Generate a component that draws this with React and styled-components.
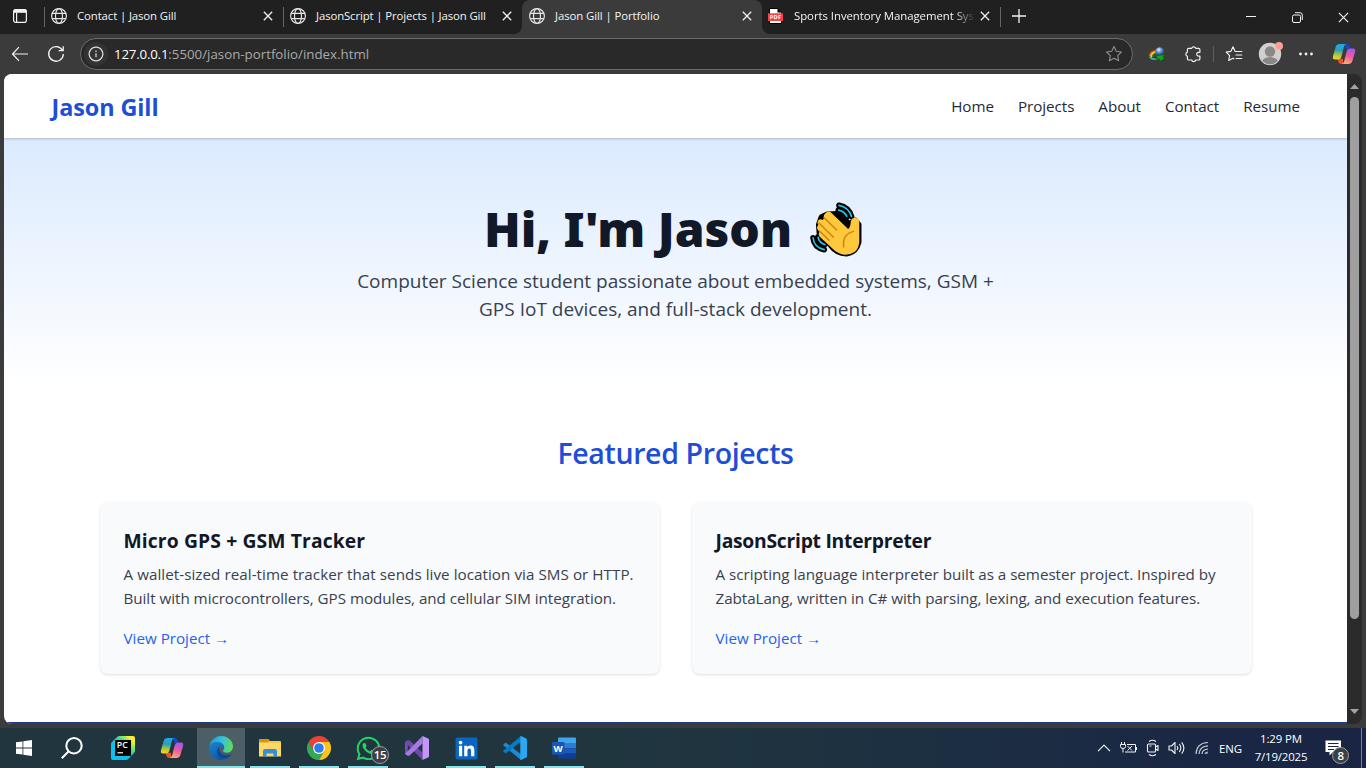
import React from 'react';
import styled, { createGlobalStyle, css } from 'styled-components';
import { FaWhatsapp, FaLinkedin } from 'react-icons/fa';

const GlobalStyle = createGlobalStyle`
  *, *::before, *::after { box-sizing: border-box; }
  html, body { margin: 0; height: 100%; overflow: hidden; }
  body {
    font-family: "Open Sans", "Noto Sans", sans-serif;
    -webkit-font-smoothing: antialiased;
  }
  h1, h2, h3, p { margin: 0; }
  a { color: inherit; text-decoration: none; }
  svg { display: block; flex: none; }
`;

const Desktop = styled.div`
  width: 1366px;
  height: 768px;
  display: flex;
  flex-direction: column;
  overflow: hidden;
  background: #3b3b3b;
`;

const Track = styled.span`
  letter-spacing: ${(p) => p.$by || 0}px;
  white-space: nowrap;
`;

/* ---------- Tab strip ---------- */

const TabStrip = styled.div`
  height: 34px;
  flex: none;
  display: flex;
  background: linear-gradient(#202020 50%, #3b3b3b 50%);
`;

const TabGroup = styled.div`
  display: flex;
  background: #202020;
  ${(p) => (p.$side === 'left'
    ? css`border-bottom-right-radius: 8px;`
    : css`flex: 1; border-bottom-left-radius: 8px;`)}
`;

const WorkspaceButton = styled.div`
  width: 44px;
  padding: 8px 0 0 12px;
`;

const Tab = styled.div`
  width: ${(p) => p.$width || 239}px;
  height: 34px;
  display: flex;
  align-items: center;
  padding: 0 10px 2px ${(p) => p.$inset || 6}px;
  color: #f3f3f3;
  font-size: 11.4px;
  ${(p) => p.$active && css`
    background: #3b3b3b;
    border-radius: 8px 8px 0 0;
  `}
`;

const TabTitle = styled.div`
  flex: 1;
  margin-left: ${(p) => (p.$fade ? 10 : 9)}px;
  white-space: nowrap;
  line-height: 18px;
  ${(p) => p.$fade && css`
    mask-image: linear-gradient(90deg, #000 160px, rgba(0, 0, 0, 0.1) 179px);
  `}
`;

const StripDivider = styled.div`
  width: 1px;
  height: 20px;
  margin-top: 7px;
  background: #666;
`;

const NewTab = styled.div`
  padding: 8px 0 0 10px;
`;

const WindowControls = styled.div`
  display: flex;
  margin-left: auto;
`;

const WindowButton = styled.div`
  width: 46px;
  height: 34px;
  display: grid;
  place-items: center;
`;

/* ---------- Toolbar ---------- */

const Toolbar = styled.div`
  height: 40px;
  flex: none;
  display: flex;
  align-items: center;
  padding-left: 2px;
  background: #3b3b3b;
`;

const ToolButton = styled.div`
  width: ${(p) => p.$width || 36}px;
  height: 36px;
  display: grid;
  place-items: center;
`;

const AddressBar = styled.div`
  width: 1053px;
  height: 32px;
  margin-left: 6px;
  margin-right: 6px;
  display: flex;
  align-items: center;
  padding: 0 9px 0 3px;
  border: 1px solid #6c6c6c;
  border-radius: 16px;
  background: #292929;
`;

const SiteInfo = styled.div`
  width: 24px;
  height: 24px;
  display: grid;
  place-items: center;
  border-radius: 50%;
  background: #333;
`;

const Url = styled.div`
  flex: 1;
  margin-left: 6px;
  font-size: 13.3px;
  line-height: 20px;
  color: #a9a9a9;
`;

const Host = styled(Track)`
  color: #fff;
`;

const ToolDivider = styled.div`
  width: 1px;
  height: 16px;
  margin: 0 2px 0 2px;
  background: #5e5e5e;
`;

/* ---------- Page ---------- */

const Viewport = styled.div`
  height: 654px;
  flex: none;
  display: flex;
  padding: 0 4px 6px;
`;

const Page = styled.div`
  width: 1343px;
  height: 650px;
  overflow: hidden;
  background: #fff;
  border-radius: 8px 0 0 8px;
  color: #111827;
`;

const SiteHeader = styled.header`
  position: relative;
  height: 64px;
  display: flex;
  align-items: center;
  justify-content: space-between;
  padding: 0 47px 0 47.5px;
  background: #fff;
  box-shadow: 0 1px 3px rgba(0, 0, 0, 0.1), 0 1px 2px rgba(0, 0, 0, 0.12);
`;

const Brand = styled.div`
  font-size: 23.4px;
  line-height: 32px;
  font-weight: 700;
  color: #1d4ed8;
  letter-spacing: -0.08px;
  padding-top: 1px;
`;

const SiteNav = styled.nav`
  display: flex;
  gap: 24px;
  font-size: 15.2px;
  line-height: 24px;
  letter-spacing: -0.04px;
  color: #1f2937;
`;

const Hero = styled.section`
  height: 248px;
  padding-top: 64px;
  display: flex;
  flex-direction: column;
  align-items: center;
  gap: 17px;
  background: linear-gradient(#dbeafe, #fff);
`;

const Greeting = styled.h1`
  display: flex;
  align-items: center;
  gap: 18px;
  height: 48px;
  font-family: "Noto Sans", sans-serif;
  font-size: 48px;
  line-height: 48px;
  font-weight: 900;
  padding: 6px 5px 0 0;
`;

const Intro = styled.p`
  width: 672px;
  text-align: center;
  font-size: 19px;
  line-height: 28px;
  color: #374151;
`;

const Featured = styled.section`
  padding: 49px 95.5px 48px;
`;

const SectionTitle = styled.h2`
  margin-bottom: 31px;
  text-align: center;
  font-size: 28.5px;
  line-height: 36px;
  font-weight: 600;
  letter-spacing: -0.36px;
  color: #1d4ed8;
`;

const ProjectGrid = styled.div`
  display: grid;
  grid-template-columns: 1fr 1fr;
  gap: 32px;
`;

const ProjectCard = styled.article`
  padding: 25px 24px 24px;
  border-radius: 8px;
  background: #f9fafb;
  box-shadow: 0 1px 3px rgba(0, 0, 0, 0.1), 0 1px 2px -1px rgba(0, 0, 0, 0.1);
  font-size: 15.2px;
  line-height: 24px;
  color: #374151;
`;

const ProjectTitle = styled.h3`
  margin-bottom: 7px;
  font-size: 19.3px;
  line-height: 28px;
  font-weight: 700;
  color: #111827;
`;

const ProjectLink = styled.a`
  display: block;
  height: 24px;
  margin-top: 16px;
  color: #2563eb;
`;

const SiteFooter = styled.footer`
  height: 40px;
  background: #1e3a8a;
`;

const Scrollbar = styled.div`
  width: 15px;
  height: 650px;
  display: flex;
  flex-direction: column;
  align-items: center;
  padding: 10px 0 10px;
  border-radius: 0 8px 8px 0;
  background: #2b2b2b;
`;

const ScrollThumb = styled.div`
  width: 9px;
  height: 522px;
  margin: 8px 0 auto;
  border-radius: 5px;
  background: #9f9f9f;
`;

/* ---------- Taskbar ---------- */

const Taskbar = styled.div`
  height: 40px;
  flex: none;
  display: flex;
  background: linear-gradient(90deg, #20353e 0%, #20363f 45%, #1c2e42 72%, #1a2744 88%, #192543 100%);
`;

const SystemButton = styled.div`
  width: 48px;
  height: 40px;
  display: grid;
  place-items: center;
`;

const AppList = styled.div`
  display: flex;
  gap: 1px;
  margin-left: 3px;
`;

const AppButton = styled.div`
  position: relative;
  width: 48px;
  height: 40px;
  display: grid;
  place-items: center;
  background: ${(p) => (p.$active ? '#4c5f66' : 'transparent')};
  ${(p) => p.$open && css`
    &::after {
      content: '';
      position: absolute;
      left: ${p.$active ? 0 : 4}px;
      right: ${p.$active ? 0 : 4}px;
      bottom: 0;
      height: 2px;
      background: #84e2e8;
    }
  `}
`;

const Badge = styled.span`
  position: absolute;
  left: ${(p) => p.$left}px;
  top: ${(p) => p.$top}px;
  width: ${(p) => p.$size}px;
  height: ${(p) => p.$size}px;
  display: grid;
  place-items: center;
  border: 1px solid #9a9fa3;
  border-radius: 50%;
  background: #3a4043;
  color: #fff;
  font-size: 11.5px;
  line-height: 12px;
  font-weight: 600;
  letter-spacing: -0.4px;
`;

const LinkedInTile = styled.div`
  width: 22px;
  height: 22px;
  display: flex;
  align-items: center;
  justify-content: center;
  background: linear-gradient(#fff, #fff) center / 18px 18px no-repeat;
`;

const Tray = styled.div`
  display: flex;
  align-items: center;
  margin-left: auto;
  color: #fff;
  font-size: 11.4px;
`;

const TrayIcon = styled.div`
  width: 24.4px;
  height: 40px;
  display: grid;
  place-items: center;
`;

const Language = styled.div`
  width: 33px;
  text-align: center;
`;

const Clock = styled.div`
  width: 68px;
  display: flex;
  flex-direction: column;
  align-items: center;
  line-height: 18px;
`;

const Notifications = styled.div`
  position: relative;
  width: 46px;
  height: 40px;
  padding: 12px 0 0 10px;
`;

const ShowDesktop = styled.div`
  width: 5px;
  height: 40px;
  border-left: 1px solid #77808f;
`;

/* ---------- Icons ---------- */

const GlobeIcon = () => (
  <svg width="18" height="18" viewBox="0 0 18 18" fill="none" stroke="#e6e6e6" strokeWidth="1.15">
    <circle cx="9" cy="9" r="7.4" />
    <ellipse cx="9" cy="9" rx="3.5" ry="7.4" />
    <path d="M2.2 6.4h13.6M2.2 11.6h13.6" />
  </svg>
);

const CloseIcon = ({ size = 10, width = 1.3 }) => (
  <svg width={size} height={size} viewBox="0 0 10 10" fill="none" stroke="#f0f0f0" strokeWidth={width}>
    <path d="M.8 .8l8.4 8.4M9.2 .8L.8 9.2" />
  </svg>
);

const PdfIcon = () => (
  <svg width="17" height="18" viewBox="0 0 17 18">
    <path d="M2.5 1.5h8.2l3.8 3.8v11.2h-12z" fill="#fff" stroke="#000" />
    <path d="M10.5 1.5v4h4z" fill="#000" />
    <rect x="1" y="6.3" width="15" height="7.7" fill="#f44343" />
    <text x="8.5" y="12.3" fontSize="5.6" fontWeight="700" fill="#fff" textAnchor="middle" letterSpacing=".3">PDF</text>
  </svg>
);

const WorkspaceIcon = () => (
  <svg width="16" height="16" viewBox="0 0 16 16" fill="none" stroke="#f2f2f2" strokeWidth="1.2">
    <rect x="1.6" y="1.6" width="12.8" height="12.8" rx="2.2" />
    <path d="M1.8 4.2V3.4q0-1.6 1.6-1.6h9.2q1.6 0 1.6 1.6v.8z" fill="#f2f2f2" />
    <path d="M4.6 4.5v9.8" />
  </svg>
);

const StarIcon = () => (
  <svg width="18" height="18" viewBox="0 0 18 18" fill="none" stroke="#8f8f8f" strokeWidth="1.1" strokeLinejoin="round">
    <path d="M9 1.6l2.3 4.7 5.1.7-3.7 3.6.9 5.1L9 13.3l-4.6 2.4.9-5.1L1.6 7l5.1-.7z" />
  </svg>
);

const FavoritesIcon = () => (
  <svg width="18" height="18" viewBox="0 0 18 18" fill="none" stroke="#f0f0f0" strokeWidth="1.15" strokeLinejoin="round" strokeLinecap="round">
    <path d="M10.2 6.4L8 1.8 5.8 6.4l-4.6.7 3.4 3.4-.9 5 4.2-2.2.9.5M11 6.5h5.8M11 10h5.8M11 13.5h5.8" />
  </svg>
);

const PuzzleIcon = () => (
  <svg width="18" height="18" viewBox="0 0 18 18" fill="none" stroke="#f0f0f0" strokeWidth="1.2" strokeLinejoin="round">
    <path d="M4.7 3.4h2.9a2.2 2.2 0 0 1 4.2 0h2.8q1.3 0 1.3 1.3v2.6h-1.3a1.9 1.9 0 0 0 0 3.8h1.3v2.6q0 1.3-1.3 1.3h-2.8a2.2 2.2 0 0 1-4.2 0H4.7q-1.3 0-1.3-1.3v-2.4a2.2 2.2 0 0 1 0-4.2V4.7q0-1.3 1.3-1.3z" />
  </svg>
);

const DownloaderIcon = () => (
  <svg width="18" height="18" viewBox="0 0 18 18">
    <defs>
      <radialGradient id="orb" cx=".42" cy=".3" r=".75">
        <stop offset="0" stopColor="#e8f4ff" />
        <stop offset=".3" stopColor="#7fa9dc" />
        <stop offset=".65" stopColor="#3565a8" />
        <stop offset="1" stopColor="#1d3c50" />
      </radialGradient>
    </defs>
    <path d="M9 5.2Q.8 6.2 1.6 11.5" fill="none" stroke="#d9401c" strokeWidth="1.6" />
    <path d="M9 6.8Q2.4 7.5 3.4 12.3" fill="none" stroke="#f8d21c" strokeWidth="2.2" />
    <path d="M8 8.8Q4.6 9.5 5.5 12.5" fill="none" stroke="#27702c" strokeWidth="2.2" />
    <path d="M1.8 12Q4.5 15.4 9.5 13.8" fill="none" stroke="#4db9a5" strokeWidth="1.5" />
    <circle cx="11.6" cy="6.6" r="4.4" fill="url(#orb)" />
    <path d="M6 10.200Q12 10.800 17.300 9.200L15 12l1.600 1.800-4.400 2.400-1.500-2.400-3 .5 1.200-2.300z" fill="#0da51d" stroke="#0a4a12" strokeWidth=".6" />
  </svg>
);

const AvatarIcon = () => (
  <svg width="26" height="26" viewBox="0 0 26 26">
    <defs><clipPath id="face"><circle cx="13" cy="13" r="10.3" /></clipPath></defs>
    <circle cx="13" cy="13" r="11.2" fill="#d2d0ce" />
    <circle cx="13" cy="10.5" r="5.2" fill="#8a8886" />
    <ellipse cx="13" cy="22.5" rx="8.6" ry="6.6" fill="#8a8886" clipPath="url(#face)" />
    <circle cx="22" cy="5" r="3.8" fill="#ff9d94" stroke="#fbb5ae" strokeWidth=".6" />
  </svg>
);

const CopilotIcon = ({ id }) => (
  <svg width="24" height="24" viewBox="0 0 24 24">
    <defs>
      <linearGradient id={`${id}a`} x1=".4" y1="0" x2=".3" y2="1">
        <stop offset="0" stopColor="#20a7f5" />
        <stop offset=".4" stopColor="#2f9fb0" />
        <stop offset=".7" stopColor="#a8c73d" />
        <stop offset="1" stopColor="#fbd51c" />
      </linearGradient>
      <linearGradient id={`${id}b`} x1=".6" y1="0" x2=".3" y2="1">
        <stop offset="0" stopColor="#a556e9" />
        <stop offset=".5" stopColor="#ee5c9c" />
        <stop offset="1" stopColor="#ffae6b" />
      </linearGradient>
    </defs>
    <path d="M12.6 2h2.2q2.2 0 2.8 2.2l.8 3h-4z" fill="#1649c4" />
    <path d="M11.4 22H9.2q-2.2 0-2.8-2.2l-.6-2.4 5-1z" fill="#f1502f" />
    <path d="M7.8 2h6.6q-1.8.3-2.4 2.6L9.3 14.9q-.7 2.5-3.2 2.5H3.2q-3 0-2.2-3.2L3.6 5Q4.5 2 7.8 2z" fill={`url(#${id}a)`} />
    <path d="M16.2 22H9.7q1.8-.3 2.4-2.6l2.7-10.3q.7-2.5 3.2-2.5h2.9q3 0 2.2 3.2L20.4 19q-.9 3-4.2 3z" fill={`url(#${id}b)`} />
  </svg>
);

const WavingHand = () => (
  <svg width="52" height="55" viewBox="34 21 154 163" fill="none" strokeLinecap="round" strokeLinejoin="round">
    <g stroke="#000" strokeWidth="17">
      <path d="M120 31Q148 36 157 64M118 45Q136 49 142 66M43 127Q46 156 76 162M58 124Q62 142 78 147" />
      <path d="M84 58L118 56L150 86L168 76L178 88V140Q170 170 142 174Q120 174 106 161L62 112L60 88L68 66z" fill="#000" />
    </g>
    <path d="M84 51Q91 47 97 53L147 101Q154 96 155 78Q158 68 168 68Q179 70 180 80V140Q178 160 166 169Q152 178 136 177Q120 176 106 164L62 123Q57 116 62 109L57 103Q52 95 59 89Q54 82 58 76Q64 70 71 74L75 71Q72 59 84 51z" fill="#ffc83d" />
    <path d="M76 68L113 104M61 84L103 125M62 107L90 134M163 108Q128 118 134 154" stroke="#cc8912" strokeWidth="4.5" />
    <path d="M120 31Q148 36 157 64M119 45Q136 49 143 63M43 127Q46 156 76 162M58 126Q62 142 78 147" stroke="#28c4ec" strokeWidth="5" />
  </svg>
);

const ScrollArrow = ({ down }) => (
  <svg width="9" height="5" viewBox="0 0 9 5">
    <path d={down ? 'M0 0h9L4.5 5z' : 'M0 5h9L4.5 0z'} fill="#a3a3a3" />
  </svg>
);

const WindowsIcon = () => (
  <svg width="16" height="16" viewBox="0 0 16 16" fill="#fff">
    <path d="M0 2.3l6.5-.9v6.1H0zM7.3 1.3L16 0v7.5H7.3zM0 8.4h6.5v6.2L0 13.7zM7.3 8.4H16V16l-8.7-1.2z" />
  </svg>
);

const SearchIcon = () => (
  <svg width="22" height="22" viewBox="0 0 22 22" fill="none" stroke="#fff" strokeWidth="2">
    <circle cx="13" cy="8.7" r="7.7" />
    <path d="M7.7 14.3L.8 21.2" />
  </svg>
);

const PyCharmIcon = () => (
  <svg width="24" height="24" viewBox="0 0 24 24">
    <defs>
      <linearGradient id="pyc" x1="0" y1="1" x2="1" y2="0">
        <stop offset=".4" stopColor="#07c3f2" />
        <stop offset=".62" stopColor="#38d9a0" />
        <stop offset=".85" stopColor="#f6ee2f" />
      </linearGradient>
    </defs>
    <path d="M8.5 0H22q2 0 2 2v12.8q0 1.2-.8 2l-6 6.2q-1 1-2.2 1H2q-2 0-2-2V8q0-1.2.9-2L6.4.8Q7.2 0 8.5 0z" fill="url(#pyc)" />
    <rect x="4" y="4" width="16" height="16" fill="#000" />
    <text x="5.8" y="12.2" fontSize="8.8" fontWeight="600" fill="#fff">PC</text>
    <path d="M6.5 16.8h5.5" stroke="#fff" strokeWidth="1.2" />
  </svg>
);

const EdgeIcon = () => (
  <svg width="24" height="24" viewBox="0 0 24 24">
    <defs>
      <linearGradient id="edgeTop" x1="0" y1=".3" x2="1" y2=".5">
        <stop offset="0" stopColor="#2595d4" />
        <stop offset=".5" stopColor="#35c1dc" />
        <stop offset="1" stopColor="#5fdc59" />
      </linearGradient>
      <linearGradient id="edgeBody" x1="0" y1="0" x2=".6" y2="1">
        <stop offset="0" stopColor="#1b86d3" />
        <stop offset="1" stopColor="#0f55a5" />
      </linearGradient>
    </defs>
    <path d="M.3 10.5C1.4 4.2 6.2 0 12 0c7 0 12 5 12 10.6 0 3.8-2.8 6.1-6 6.1-2.8 0-4-1-4-1.9 0-.8 1.2-1.2 1.2-3.3 0-2.8-3-5.5-7-5.5-3.5 0-6.4 1.8-7.9 4.5z" fill="url(#edgeTop)" />
    <path d="M.2 10.7C1.5 7.8 4.5 6 8.2 6c4 0 7 2.6 7 5.4-3-1.6-6.4-.3-6.4 3.5 0 4.5 4.6 8.7 10 6.9l1.3-.6C18.2 23 15.3 24 12 24 5.2 24-.8 18.5.2 10.7z" fill="url(#edgeBody)" />
    <path d="M10.3 10.7c-4 2.6-2.8 9.8 2.2 11.2 2.7.8 5.9.2 8.6-1.7 1-.8 1.8-1.8 1.4-2.1-.4-.3-1.9 1-4.9 1-4.8 0-8.1-4.2-7.3-8.4z" fill="#0d4a93" />
  </svg>
);

const ExplorerIcon = () => (
  <svg width="22" height="20" viewBox="0 0 22 20">
    <path d="M0 1.5Q0 1 .6 1h8.6l1.6 2H21q1 0 1 1v14H0z" fill="#f9c64c" />
    <path d="M0 1.5Q0 1 .6 1h8.6l1 1.5-1 1.8H0z" fill="#dc9400" />
    <path d="M0 5h22v13.5H0z" fill="#ffd867" />
    <path d="M4 18.8v-5.6Q4 11 6.2 11h9.6Q18 11 18 13.2v5.6h-3.5v-3.3h-7v3.3z" fill="#338fd8" />
  </svg>
);

const ChromeIcon = () => (
  <svg width="24" height="24" viewBox="0 0 24 24">
    <path d="M1.6 6A12 12 0 0 1 22.4 6H12L6.8 15z" fill="#ea4335" />
    <path d="M1.6 6A12 12 0 0 0 12 24l5.2-9H6.8z" fill="#34a853" />
    <path d="M22.4 6A12 12 0 0 1 12 24l5.2-9L12 6z" fill="#fcc31e" />
    <circle cx="12" cy="12" r="6" fill="#fff" />
    <circle cx="12" cy="12" r="4.8" fill="#2f7cee" />
  </svg>
);

const VisualStudioIcon = () => (
  <svg width="24" height="24" viewBox="0 0 24 24">
    <path d="M0 6v12l2.8 1.7V4.3z" fill="#7550b8" />
    <path d="M0 6L2.8 4.3Q3.8 4 4.6 4.6L17.5 16.5V24L2.8 9z" fill="#6f48b2" />
    <path d="M0 18L2.8 19.7Q3.8 20 4.6 19.4L17.5 7.5V0L2.8 15z" fill="#a779e2" />
    <path d="M17.5 0L24 3v18l-6.5 3z" fill="#c596fa" />
  </svg>
);

const VsCodeIcon = () => (
  <svg width="24" height="24" viewBox="0 0 24 24">
    <path d="M.4 8.6l1.7-1.5q.6-.5 1.3 0L18 18.2V24L.5 9.6q-.5-.5-.1-1z" fill="#1d8ad2" />
    <path d="M.4 15.4l1.7 1.5q.6.5 1.3 0L18 5.8V0L.5 14.4q-.5.5-.1 1z" fill="#0879c6" />
    <path d="M17.3.3Q18 0 18.6.3l4.6 2.2q.8.4.8 1.3v16.4q0 .9-.8 1.3l-4.6 2.2q-.6.3-1.3 0z" fill="#29a9f2" />
  </svg>
);

const WordIcon = () => (
  <svg width="24" height="22" viewBox="0 0 24 22">
    <path d="M6 1.5Q6 .5 7 .5h16q1 0 1 1V6H6z" fill="#41a5ee" />
    <path d="M6 6h18v5.3H6z" fill="#2b7cd3" />
    <path d="M6 11.3h18v5.2H6z" fill="#185abd" />
    <path d="M6 16.5h18v4.3q0 1-1 1H7q-1 0-1-1z" fill="#103f91" />
    <rect y="5" width="12.5" height="12.5" rx="1" fill="#1a56b5" />
    <text x="6.2" y="14.8" fontSize="9.5" fontWeight="700" fill="#fff" textAnchor="middle">W</text>
  </svg>
);

const LineIcon = ({ w = 16, h = 16, d, sw = 1.2, color = '#f2f2f2' }) => (
  <svg width={w} height={h} viewBox={`0 0 ${w} ${h}`} fill="none" stroke={color} strokeWidth={sw} strokeLinejoin="round">
    <path d={d} />
  </svg>
);

/* ---------- Sections ---------- */

const apps = [
  { name: 'PyCharm', icon: <PyCharmIcon /> },
  { name: 'Copilot', icon: <CopilotIcon id="dock" /> },
  { name: 'Edge', icon: <EdgeIcon />, open: true, active: true },
  { name: 'Explorer', icon: <ExplorerIcon />, open: true },
  { name: 'Chrome', icon: <ChromeIcon />, open: true },
  { name: 'WhatsApp', icon: <FaWhatsapp size={27} color="#25d366" />, open: true, count: 15 },
  { name: 'Visual Studio', icon: <VisualStudioIcon /> },
  { name: 'LinkedIn', icon: <LinkedInTile><FaLinkedin size={25} color="#0a66c2" /></LinkedInTile>, open: true },
  { name: 'VS Code', icon: <VsCodeIcon />, open: true },
  { name: 'Word', icon: <WordIcon />, open: true },
];

const projects = [
  {
    title: 'Micro GPS + GSM Tracker',
    titleTrack: 0.13,
    lines: [
      ['A wallet-sized real-time tracker that sends live location via SMS or HTTP.', 0.05],
      ['Built with microcontrollers, GPS modules, and cellular SIM integration.', -0.03],
    ],
  },
  {
    title: 'JasonScript Interpreter',
    titleTrack: -0.25,
    lines: [
      ['A scripting language interpreter built as a semester project. Inspired by', -0.02],
      ['ZabtaLang, written in C# with parsing, lexing, and execution features.', -0.05],
    ],
  },
];

const BrowserTab = ({ title, track, icon = <GlobeIcon />, fade, ...rest }) => (
  <Tab {...rest}>
    {icon}
    <TabTitle $fade={fade}><Track $by={track}>{title}</Track></TabTitle>
    <CloseIcon />
  </Tab>
);

const BrowserChrome = () => (
  <>
    <TabStrip>
      <TabGroup $side="left">
        <WorkspaceButton><WorkspaceIcon /></WorkspaceButton>
        <StripDivider />
        <BrowserTab title="Contact | Jason Gill" track={-0.12} $width={238} $inset={5} />
        <StripDivider />
        <BrowserTab title="JasonScript | Projects | Jason Gill" track={-0.13} $width={238} $inset={5} />
      </TabGroup>
      <BrowserTab title="Jason Gill | Portfolio" track={-0.09} $width={240} $active />
      <TabGroup $side="right">
        <BrowserTab title="Sports Inventory Management Sys" track={-0.05} icon={<PdfIcon />} fade $width={238} $inset={5} />
        <StripDivider />
        <NewTab><LineIcon d="M8 1v14M1 8h14" sw={1.3} /></NewTab>
        <WindowControls>
          <WindowButton><LineIcon w={10} h={10} d="M0 4.5h10" sw={1} /></WindowButton>
          <WindowButton>
            <LineIcon w={11} h={11} sw={1} d="M2 3h5q1.5 0 1.5 1.5v4.5q0 1.5-1.5 1.5H2Q.5 10.5.5 9V4.5Q.5 3 2 3zM3 .7h5q2.3 0 2.3 2.3v5" />
          </WindowButton>
          <WindowButton><CloseIcon size={11} width={1.1} /></WindowButton>
        </WindowControls>
      </TabGroup>
    </TabStrip>
    <Toolbar>
      <ToolButton><LineIcon w={18} h={16} d="M17 8H1.8M8 1.2L1.5 8 8 14.8" /></ToolButton>
      <ToolButton>
        <LineIcon w={18} h={18} sw={1.3} d="M15.3 5.2A7.3 7.3 0 1 0 16.3 9M16.2 1.2v4.5h-4.5" />
      </ToolButton>
      <AddressBar>
        <SiteInfo><LineIcon d="M8 1.2a6.8 6.8 0 1 0 .01 0zM8 7.2v4M8 4.6v1.4" sw={1.2} color="#e0e0e0" /></SiteInfo>
        <Url><Host $by={-0.2}>127.0.0.1</Host><Track>:5500/jason-portfolio/index.html</Track></Url>
        <StarIcon />
      </AddressBar>
      <ToolButton><DownloaderIcon /></ToolButton>
      <ToolButton><PuzzleIcon /></ToolButton>
      <ToolDivider />
      <ToolButton><FavoritesIcon /></ToolButton>
      <ToolButton><AvatarIcon /></ToolButton>
      <ToolButton>
        <svg width="16" height="4" viewBox="0 0 16 4" fill="#f0f0f0">
          <circle cx="2.5" cy="2" r="1.4" /><circle cx="8" cy="2" r="1.4" /><circle cx="13.5" cy="2" r="1.4" />
        </svg>
      </ToolButton>
      <ToolButton $width={40}><CopilotIcon id="side" /></ToolButton>
    </Toolbar>
  </>
);

const Portfolio = () => (
  <Page>
    <SiteHeader>
      <Brand>Jason Gill</Brand>
      <SiteNav>
        {['Home', 'Projects', 'About', 'Contact', 'Resume'].map((label) => (
          <a key={label} href={`#${label.toLowerCase()}`}>{label}</a>
        ))}
      </SiteNav>
    </SiteHeader>
    <Hero>
      <Greeting>Hi, I'm Jason<WavingHand /></Greeting>
      <Intro>
        Computer Science student passionate about embedded systems, GSM +<br />
        GPS IoT devices, and full-stack development.
      </Intro>
    </Hero>
    <Featured>
      <SectionTitle>Featured Projects</SectionTitle>
      <ProjectGrid>
        {projects.map((project) => (
          <ProjectCard key={project.title}>
            <ProjectTitle><Track $by={project.titleTrack}>{project.title}</Track></ProjectTitle>
            {project.lines.map(([text, track]) => (
              <p key={text}><Track $by={track}>{text}</Track></p>
            ))}
            <ProjectLink href="#project">View Project →</ProjectLink>
          </ProjectCard>
        ))}
      </ProjectGrid>
    </Featured>
    <SiteFooter />
  </Page>
);

const SystemTaskbar = () => (
  <Taskbar>
    <SystemButton><WindowsIcon /></SystemButton>
    <SystemButton><SearchIcon /></SystemButton>
    <AppList>
      {apps.map((app) => (
        <AppButton key={app.name} $open={app.open} $active={app.active}>
          {app.icon}
          {app.count && <Badge $left={27} $top={18} $size={18}>{app.count}</Badge>}
        </AppButton>
      ))}
    </AppList>
    <Tray>
      <TrayIcon><LineIcon w={14} h={8} d="M1 7.2L7 1.2l6 6" /></TrayIcon>
      <TrayIcon>
        <LineIcon w={17} h={14} sw={1} d="M1.5 1v2.5M4.5 1v2.5M.5 3.5h5v2Q5.5 7.5 3 7.5.5 7.5.5 5.500zM3 7.5V11.500M7 3.500h8.500v7.500H5M16.500 6v3M7.500 5l4.500 4.500M12 5L7.500 9.500" />
      </TrayIcon>
      <TrayIcon>
        <LineIcon w={14} h={18} sw={1.1} d="M3 2.5Q6.500 0 10 2.500M3 15.500Q6.500 18 10 15.500M2.500 5h6q1 0 1 1v6q0 1-1 1h-6q-1 0-1-1V6q0-1 1-1zM9.500 8l2.500-1.500v5L9.500 10M3.500 7h2" />
      </TrayIcon>
      <TrayIcon>
        <LineIcon w={18} h={14} sw={1.1} d="M1 5h2.5L7 1.5v11L3.5 9H1zM9 5q1.5 2 0 4M11.3 3q3 4 0 8M13.6 1.3q4.6 5.7 0 11.4" />
      </TrayIcon>
      <TrayIcon>
        <LineIcon w={14} h={14} sw={1.2} color="#c5cbd3" d="M1 13Q1.5 2 13 1.5M4 13Q4.5 5.2 13 4.8M7 13Q7.3 8.3 13 8M10 13Q10.3 11.3 13 11M11.5 12.5h1" />
      </TrayIcon>
      <Language><Track>ENG</Track></Language>
      <Clock>
        <Track $by={-0.08}>1:29 PM</Track>
        <Track $by={-0.15}>7/19/2025</Track>
      </Clock>
      <Notifications>
        <svg width="17" height="17" viewBox="0 0 17 17">
          <path d="M.5.5h15.5v11.5H8L4.5 15.5V12h-4z" fill="#fff" />
          <path d="M3 3.5h10.5M3 6.5h10.5M3 9.5h6" stroke="#1a2744" />
        </svg>
        <Badge $left={17} $top={19} $size={17}>8</Badge>
      </Notifications>
      <ShowDesktop />
    </Tray>
  </Taskbar>
);

export default function App() {
  return (
    <>
      <GlobalStyle />
      <Desktop>
        <BrowserChrome />
        <Viewport>
          <Portfolio />
          <Scrollbar>
            <ScrollArrow />
            <ScrollThumb />
            <ScrollArrow down />
          </Scrollbar>
        </Viewport>
        <SystemTaskbar />
      </Desktop>
    </>
  );
}
